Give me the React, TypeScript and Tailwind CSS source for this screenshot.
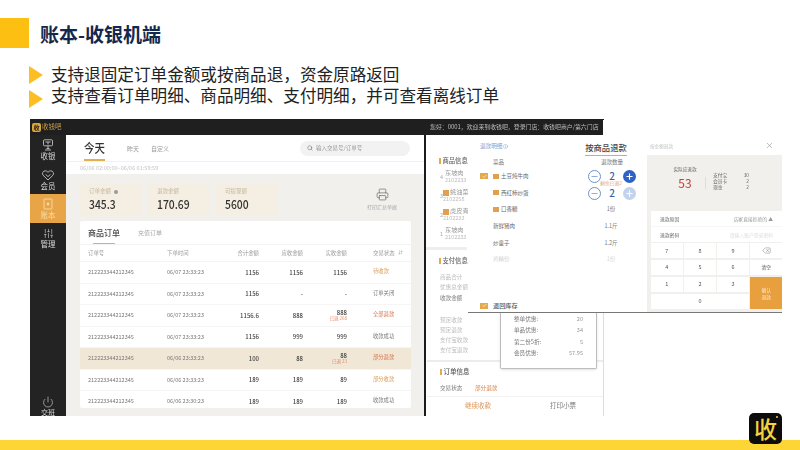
import React from "react";
import { Power, Search, Printer, X, Delete, Check, Minus, Plus, Sliders, Info, ArrowDownUp } from "lucide-react";

const font = { fontFamily: '"Noto Sans CJK SC","Noto Sans",sans-serif' };

const rows = [
  ["06/07 23:33:23", "1156", "1156", "1156", "", "待收款", "text-[#d89a5a]", false],
  ["06/07 23:33:23", "1156", "-", "-", "", "订单关闭", "text-[#777]", false],
  ["06/07 23:33:23", "1156.6", "888", "888", "已退 268", "全部退款", "text-[#d9734a]", false],
  ["06/07 23:33:23", "1156", "999", "999", "", "收款成功", "text-[#777]", false],
  ["06/06 23:33:23", "100", "88", "88", "已退 23", "部分退款", "text-[#d9734a]", true],
  ["06/06 23:33:23", "189", "189", "89", "", "部分收款", "text-[#d89a5a]", false],
  ["06/06 23:30:23", "189", "189", "189", "", "收款成功", "text-[#777]", false],
] as const;

function Triangle() {
  return (
    <svg width="14" height="18" viewBox="0 0 14 18" className="shrink-0">
      <polygon points="0,0 14,9 0,18" fill="#fbbf24" />
    </svg>
  );
}

function RegisterIcon() {
  return (
    <svg width="12" height="12" viewBox="0 0 12 12" fill="none" stroke="currentColor" strokeWidth="0.8">
      <rect x="1.5" y="0.8" width="9" height="6" rx="1" />
      <path d="M3.5 3h5M6 3v2.4M4.5 9.5h3M6 6.8v2.7M3 11h6" />
    </svg>
  );
}

function MemberIcon() {
  return (
    <svg width="12" height="12" viewBox="0 0 12 12" fill="none" stroke="currentColor" strokeWidth="0.8">
      <path d="M6 11 1 6.2C-.2 4.7.8 1.8 3.3 1.8 4.6 1.8 5.5 2.5 6 3.3 6.5 2.5 7.4 1.8 8.7 1.8c2.500 0 3.500 2.900 2.300 4.400z" />
      <path d="M3.600 5.400 6 7.600 8.400 5.400" />
    </svg>
  );
}

function LedgerIcon() {
  return (
    <svg width="12" height="12" viewBox="0 0 12 12" fill="none" stroke="currentColor" strokeWidth="0.9">
      <rect x="2" y="1" width="8" height="10" rx="0.6" />
      <rect x="4.800" y="4.800" width="2.400" height="2.400" fill="currentColor" stroke="none" />
    </svg>
  );
}

function NavItem({ icon, label, active }: { icon: React.ReactNode; label: string; active?: boolean }) {
  return (
    <div className={`flex flex-col items-center justify-center h-[29px] ${active ? "bg-[#e8a548] text-[#f7dcae]" : "text-[#d8d8d8]"}`}>
      {icon}
      <span className="text-[7.500px] leading-[9px]">{label}</span>
    </div>
  );
}

function StatCard({ label, value, info }: { label: string; value: string; info?: boolean }) {
  return (
    <div className="w-[62px] h-[33px] bg-[#f5efe3] pl-[9px] pt-[5px] flex flex-col">
      <span className="text-[5.500px] leading-[7px] text-[#c4b59c] flex items-center gap-[3px]">
        {label}
        {info && <span className="w-[4px] h-[4px] rounded-full bg-[#999]" />}
      </span>
      <span className="text-[12.500px] leading-[15px] font-medium text-[#333] mt-[1px] scale-x-[0.83] origin-left">{value}</span>
    </div>
  );
}

function DishRow({ name, qty, tag, faded }: { name: string; qty: string; tag?: boolean; faded?: boolean }) {
  return (
    <div className={`flex items-center h-[16.600px] pl-[25px] ${faded ? "opacity-30" : ""}`}>
      {tag && <span className="w-[6px] h-[5px] bg-[#e0a050] mr-[2px]" />}
      <span className="text-[5.500px] text-[#666] flex-1">{name}</span>
      <span className="text-[5.500px] text-[#777] w-[30px] mr-[21px] text-center">{qty}</span>
    </div>
  );
}

function Stepper({ light }: { light?: boolean }) {
  return (
    <div className="absolute left-[120px] flex items-center w-[48px] justify-between">
      <span className="w-[12.500px] h-[12.500px] rounded-full border border-[#6f93c9] flex items-center justify-center text-[#6f93c9]">
        <Minus size={9} />
      </span>
      <span className="text-[10px] leading-none font-medium text-[#3a5f9e]">2</span>
      <span className={`w-[12.500px] h-[12.500px] rounded-full flex items-center justify-center text-white ${light ? "bg-[#c3d3ec]" : "bg-[#2f62c6]"}`}>
        <Plus size={9} strokeWidth={3} />
      </span>
    </div>
  );
}

function GoodsItem({ n, name, id, tag }: { n: string; name: string; id: string; tag?: boolean }) {
  return (
    <div className="h-[19px] flex">
      <span className="w-[5px] text-[#aaa] pt-[3px] text-[5.500px]">{n}</span>
      <div className="flex flex-col text-[6.200px] leading-[6.500px] whitespace-nowrap">
        <span className="flex items-center">
          {tag && <span className="w-[6px] h-[6px] bg-[#e0a050] mr-[1px]" />}
          <span className="text-[#999]">{name}</span>
        </span>
        <span className="text-[#bbb] text-[5.500px]">{id}</span>
      </div>
    </div>
  );
}

export default function App() {
  return (
    <div className="relative w-[800px] h-[450px] overflow-hidden bg-white" style={font}>
      {/* Header */}
      <div className="flex items-center h-[30px] mt-[18px] absolute top-0 left-0">
        <div className="w-[29px] h-[30px] bg-[#fdbf12]" />
        <h1 className="ml-[11px] text-[19px] font-bold text-[#14284b] leading-none">账本-收银机端</h1>
      </div>

      {/* Bullets */}
      <div className="absolute left-[29px] top-[64px] flex flex-col text-[#222] text-[16.600px] leading-[21px]">
        <div className="flex items-center h-[21px]"><Triangle /><span className="ml-[8px]">支持退固定订单金额或按商品退，资金原路返回</span></div>
        <div className="flex items-center h-[21px]"><span className="relative top-[3px]"><Triangle /></span><span className="ml-[8px]">支持查看订单明细、商品明细、支付明细，并可查看离线订单</span></div>
      </div>

      {/* Main window */}
      <div className="absolute left-[30px] top-[119px] w-[574px] h-[297px] flex flex-col blur-[0.35px] overflow-hidden">
        <div className="h-[16px] bg-[#1f1f1f] flex items-center justify-between shrink-0">
          <div className="flex items-center pl-[2px] gap-[1px]">
            <span className="w-[9px] h-[9px] rounded-[2px] bg-[#d9a53c] text-[6px] leading-[9px] text-center text-[#222] font-bold">收</span>
            <span className="text-[6.500px] text-[#c9a04c]">收钱吧</span>
          </div>
          <span className="text-[5.900px] text-[#bdbdbd] w-[174px] whitespace-nowrap overflow-hidden">您好：0001，欢迎来到收钱吧，登录门店：收钱吧商户/第六门店</span>
        </div>
        <div className="flex flex-1 min-h-0">
          {/* Sidebar */}
          <aside className="w-[36px] bg-[#232323] flex flex-col shrink-0 overflow-hidden">
            <NavItem label="收银" icon={<RegisterIcon />} />
            <div className="mt-[1px]"><NavItem label="会员" icon={<MemberIcon />} /></div>
            <NavItem label="账本" active icon={<LedgerIcon />} />
            <NavItem label="管理" icon={<Sliders size={11} strokeWidth={1.300} />} />
            <div className="mt-auto -mb-[1px] flex flex-col items-center text-[#ddd]">
              <Power size={12} strokeWidth={1.200} />
              <span className="text-[7px] leading-[9px]">交班</span>
            </div>
          </aside>

          {/* Ledger content */}
          <main className="w-[358px] shrink-0 bg-[#f1f0ed] flex flex-col">
            <div className="h-[27px] bg-white flex items-center pl-[18px] pr-[14px] border-b border-[#f1f1f1] shrink-0">
              <div className="relative h-[27px] w-[21px] flex items-center">
                <span className="text-[12px] text-[#333] font-medium leading-none whitespace-nowrap scale-x-[0.87] origin-left">今天</span>
                <span className="absolute left-0 right-0 bottom-[1px] h-[1.500px] bg-[#e3b04f]" />
              </div>
              <span className="text-[6px] text-[#999] ml-[22px]">昨天</span>
              <span className="text-[6px] text-[#999] ml-[12px]">自定义</span>
              <div className="ml-auto w-[110px] h-[15px] rounded-full bg-[#f2f2f2] flex items-center pl-[7px] gap-[3px]">
                <Search size={6} className="text-[#666]" />
                <span className="text-[5.500px] text-[#999]">输入交易号/订单号</span>
              </div>
            </div>
            <div className="h-[12px] bg-white flex items-center pl-[14px] text-[5.600px] text-[#c4c4c4] shrink-0">06/06 02:00:00~06/06 01:59:59</div>

            <div className="flex items-center pl-[14px] mt-[9px] gap-[6px] shrink-0">
              <StatCard label="订单金额" value="345.3" info />
              <StatCard label="退款金额" value="170.69" />
              <StatCard label="可提现额" value="5600" />
              <div className="ml-[83px] flex flex-col items-center text-[#555]">
                <Printer size={13} strokeWidth={1.100} />
                <span className="text-[5px] text-[#aaa] mt-[2px]">打印汇总单据</span>
              </div>
            </div>

            <section className="ml-[14px] w-[331px] mt-[5px] h-[187px] bg-white rounded-[2px] flex flex-col overflow-hidden">
              <div className="h-[23px] pl-[8px] flex items-center gap-[18px] shrink-0">
                <div className="relative h-[23px] flex items-center">
                  <span className="text-[8px] font-medium text-[#444]">商品订单</span>
                  <span className="absolute left-[5px] right-[5px] bottom-[0px] h-[1.500px] bg-[#e3b04f]" />
                </div>
                <span className="text-[6px] text-[#aaa]">充值订单</span>
              </div>
              <div className="h-[18px] pl-[8px] grid grid-cols-[79px_62px_30px_44px_44px_1fr] items-center text-[5.400px] text-[#999] border-y border-[#f3f3f3] shrink-0">
                <span>订单号</span>
                <span>下单时间</span>
                <span className="text-right">合计金额</span>
                <span className="text-right">应收金额</span>
                <span className="text-right">实收金额</span>
                <span className="pl-[26px] flex items-center gap-[3px]">交易状态<ArrowDownUp size={5} /></span>
              </div>
              {rows.map((r, i) => (
                <div key={i} className={`h-[21.500px] pl-[8px] grid grid-cols-[79px_62px_30px_44px_44px_1fr] items-center border-b border-[#f5f5f5] shrink-0 ${r[7] ? "bg-[#f1e7d6]" : ""}`}>
                  <span className="text-[5.500px] text-[#777]">212223344212345</span>
                  <span className="text-[5.500px] text-[#777]">{r[0]}</span>
                  <span className="text-[6px] text-[#444] font-medium text-right">{r[1]}</span>
                  <span className="text-[6px] text-[#444] font-medium text-right">{r[2]}</span>
                  <span className="flex flex-col items-end">
                    <span className="text-[6px] leading-[7px] text-[#444] font-medium">{r[3]}</span>
                    {r[4] && <span className="text-[4.500px] leading-[5px] text-[#e08a6a]">{r[4]}</span>}
                  </span>
                  <span className={`pl-[26px] text-[5.300px] ${r[6]}`}>{r[5]}</span>
                </div>
              ))}
            </section>
          </main>

          {/* Order detail */}
          <div className="flex-1 border-l-2 border-[#1c1c1c] bg-white flex flex-col pl-[14px] text-[#999] text-[5.600px]">
            <div className="flex items-center mt-[21px] gap-[2px]">
              <span className="w-[1.500px] h-[6px] bg-[#e3a94a] -ml-[1px]" />
              <span className="text-[6.300px] font-medium text-[#666]">商品信息</span>
            </div>
            <div className="flex flex-col mt-[5px] w-[28px]">
              <GoodsItem n="4" name="东坡肉" id="2102233" />
              <GoodsItem n="3" name="蚝油菜" id="2102258" tag />
              <GoodsItem n="2" name="虎皮青" id="2102233" tag />
              <GoodsItem n="1" name="东坡肉" id="2102233" />
            </div>
            <div className="h-[3px] w-[41px] bg-[#eee] -ml-[14px] mt-[1px]" />
            <div className="flex items-center mt-[6px] gap-[2px]">
              <span className="w-[1.500px] h-[6px] bg-[#e3a94a] -ml-[1px]" />
              <span className="text-[6.300px] font-medium text-[#666]">支付信息</span>
            </div>
            <div className="flex flex-col mt-[6px] leading-[10px] text-[#bbb]">
              <span>商品合计</span>
              <span>优惠总金额</span>
              <span className="text-[#777] leading-[12px]">收款金额</span>
              <span className="mt-[11px]">预定收款</span>
              <span>预定退款</span>
              <span>支付宝收款</span>
              <span>支付宝退款</span>
            </div>
          </div>
        </div>
      </div>

      {/* Order info bottom section */}
      <div className="absolute left-[427px] top-[360px] w-[176px] h-[56px] bg-white border-t-2 border-[#ececec] flex flex-col blur-[0.35px]">
        <div className="flex items-center pl-[13px] h-[21px] gap-[2px]">
          <span className="w-[1.500px] h-[6px] bg-[#e3a94a]" />
          <span className="text-[6.500px] font-medium text-[#555]">订单信息</span>
        </div>
        <div className="flex items-center pl-[13px] h-[13px] text-[5.600px]">
          <span className="text-[#777] w-[35px]">交易状态</span>
          <span className="text-[#d9844a]">部分退款</span>
        </div>
        <div className="flex items-center h-[21px] border-t border-[#f2f2f2] mt-[1px] text-[6.500px]">
          <span className="ml-[38px] text-[#d9965a]">继续收款</span>
          <span className="ml-[59px] text-[#777]">打印小票</span>
        </div>
      </div>

      {/* Discount popover */}
      <div className="absolute left-[500px] top-[312px] w-[97px] h-[57px] bg-white border-x border-b border-[#bdbdbd] rounded-b-[2px] shadow-sm pt-[1px] flex flex-col px-[13px] blur-[0.35px] text-[5.600px] text-[#777]">
        {[["整单优惠:", "20"], ["单品优惠:", "34"], ["第二份5折:", "5"], ["会员优惠:", "57.95"]].map(([a, b]) => (
          <div key={a} className="flex justify-between h-[11.500px] items-center"><span>{a}</span><span className="text-[#999]">{b}</span></div>
        ))}
      </div>

      {/* Vertical rule under refund panel */}
      <div className="absolute left-[603px] top-[312px] w-px h-[104px] bg-[#ddd]" />

      {/* Refund by dish panel */}
      <div className="absolute left-[468px] top-[120px] w-[314px] h-[193px] border-b border-[#777] blur-[0.35px]">
        <div className="absolute left-[135px] top-0 w-[179px] h-[15px] bg-white" />
        <div className="absolute left-0 top-[15px] w-[179px] h-[177px] bg-white" />
        <div className="absolute left-[179px] top-0 w-[135px] h-[192px] bg-white" />

        <span className="absolute left-[12px] top-[22px] text-[5.600px] text-[#7fa0cc] flex items-center gap-[1px]">退款明细<Info size={5} /></span>
        <div className="absolute left-[117px] top-[20px] h-[16px] w-[42px] border-b-[1.500px] border-[#e3a94a] text-center text-[8.300px] font-medium text-[#444] leading-[14px]">按商品退款</div>

        <div className="absolute left-0 top-[38px] w-[179px] flex flex-col">
          <div className="h-[9px] flex items-center pl-[25px] text-[5.500px] text-[#777]">菜品<span className="ml-auto mr-[24px]">退款数量</span></div>
          <div className="relative flex flex-col mt-[1px]">
            <div className="absolute left-[12px] top-[5px] w-[8px] h-[6px] bg-[#e3a94a] flex items-center justify-center text-white"><Check size={5} strokeWidth={3} /></div>
            <div className="absolute top-[2px] left-0 w-full"><Stepper /></div>
            <div className="absolute top-[19px] left-0 w-full"><Stepper light /></div>
            <span className="absolute left-[132px] top-[12px] text-[4.800px] leading-[5px] text-[#e0a060]">剩余已退2</span>
            <div className="flex items-center h-[16.600px] pl-[25px]"><span className="w-[6px] h-[5px] bg-[#e0a050] mr-[2px]" /><span className="text-[5.500px] text-[#666]">土豆炖牛肉</span></div>
            <div className="flex items-center h-[16.600px] pl-[25px]"><span className="w-[6px] h-[5px] bg-[#e0a050] mr-[2px]" /><span className="text-[5.500px] text-[#666]">西红柿炒蛋</span></div>
            <DishRow name="口香糖" qty="1份" tag />
            <DishRow name="新鲜猪肉" qty="1.1斤" />
            <DishRow name="炒童子" qty="1.2斤" />
            <DishRow name="鸡精份" qty="1份" faded />
          </div>
        </div>

        <div className="absolute left-[12px] top-[181px] flex items-center">
          <span className="w-[8px] h-[6px] bg-[#e3a94a] flex items-center justify-center text-white"><Check size={5} strokeWidth={3} /></span>
          <span className="ml-[5px] text-[6.200px] font-medium text-[#555]">退回库存</span>
        </div>

        <div className="absolute left-[179px] top-[0px] w-[135px] h-[192px] flex flex-col">
          <div className="h-[35px] flex items-end pb-[5px] justify-between pr-[8px] pl-[3px]">
            <span className="text-[4.600px] text-[#c4c4c4]">按金额退款</span>
            <X size={9} strokeWidth={1} className="text-[#555]" />
          </div>
        </div>
      </div>

      {/* Refund keypad */}
      <div className="absolute left-[647px] top-[155px] w-[135px] h-[157px] bg-[#f1f0ed] flex flex-col blur-[0.35px]">
        <div className="h-[56px] flex items-start pt-[11px] pl-[25px]">
          <div className="flex flex-col items-center w-[26px]">
            <span className="text-[4.600px] text-[#666] whitespace-nowrap">实际应退款</span>
            <span className="text-[12px] leading-[16px] text-[#cc3b32] mt-[2px]">53</span>
          </div>
          <div className="w-px h-[12px] bg-[#ddd] mt-[11px] ml-[7px]" />
          <div className="ml-[7px] mt-[6px] w-[36px] flex flex-col text-[4.800px] leading-[6px] text-[#666]">
            <div className="flex justify-between"><span>支付宝</span><span>30</span></div>
            <div className="flex justify-between"><span>会员卡</span><span>2</span></div>
            <div className="flex justify-between"><span>现金</span><span>2</span></div>
          </div>
        </div>
        <div className="ml-[4px] h-[31px] bg-white flex flex-col text-[4.800px]">
          <div className="h-[15px] px-[9px] flex items-center justify-between text-[#666]"><span>退款原因</span><span className="text-[#999]">店家直接拒绝的 ▲</span></div>
          <div className="h-[16px] px-[9px] flex items-center justify-between text-[#666] border-t border-[#f7f7f7]"><span>退款密码</span><span className="text-[#ddd]">请输入账户登录密码</span></div>
        </div>
        <div className="ml-[4px] mt-[1px] grid grid-cols-4 grid-rows-4 gap-[1.500px] h-[66px] text-[5.500px] text-[#555]">
          {["7", "8", "9"].map((k) => <div key={k} className="bg-white flex items-center justify-center">{k}</div>)}
          <div className="bg-white flex items-center justify-center"><Delete size={9} strokeWidth={1} /></div>
          {["4", "5", "6"].map((k) => <div key={k} className="bg-white flex items-center justify-center">{k}</div>)}
          <div className="bg-white flex items-center justify-center text-[4.600px]">清空</div>
          {["1", "2", "3"].map((k) => <div key={k} className="bg-white flex items-center justify-center">{k}</div>)}
          <div className="row-span-2 bg-[#e8a03f] text-[#fbe6c4] text-[4.800px] leading-[7px] flex items-center justify-center text-center">确认<br />退款</div>
          <div className="col-span-3 bg-white flex items-center justify-center">0</div>
        </div>
      </div>

      {/* Footer */}
      <div className="absolute left-0 bottom-0 w-full h-[10px] bg-[#fdd535]" />
      <div className="absolute left-[749px] top-[413px] w-[33px] h-[31px] rounded-[5px] bg-[#0c0c0c] flex items-center justify-center">
        <span className="text-[23px] leading-none font-medium text-[#f4d33f]">收</span>
        <span className="absolute right-[4px] top-[3px] w-[2px] h-[2px] rounded-full bg-[#f4d33f]" />
      </div>
    </div>
  );
}
